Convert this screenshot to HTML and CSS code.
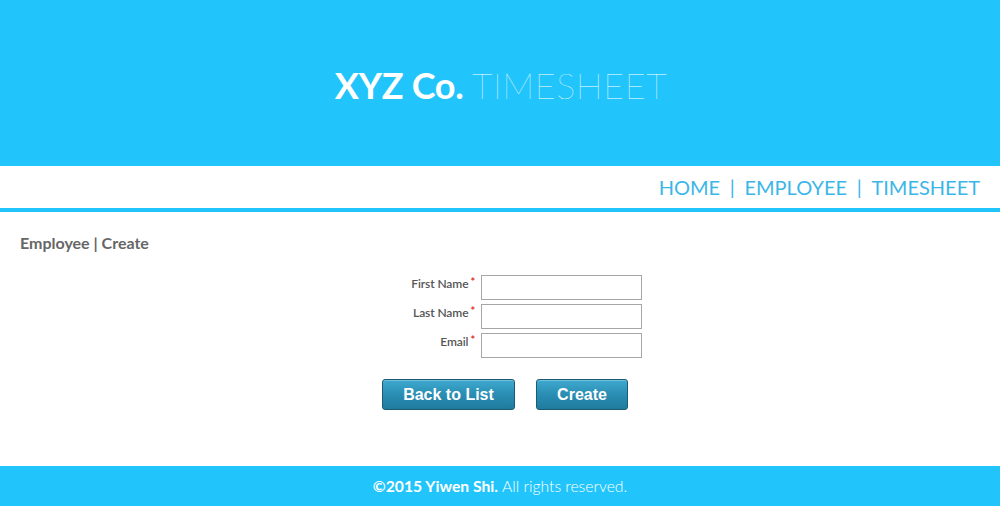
FILE: index.html
```html
<!DOCTYPE html>
<html>
<head>
<meta charset="utf-8">
<link rel="stylesheet" href="styles.css">
</head>
<body>
<header class="banner">
  <h1 class="title"><span class="brand">XYZ Co.</span> <span class="product">TIMESHEET</span></h1>
</header>
<nav class="nav">
  <a href="#">HOME</a><span class="sep">|</span><a href="#">EMPLOYEE</a><span class="sep">|</span><a href="#">TIMESHEET</a>
</nav>
<main class="content">
  <h2 class="crumb">Employee | Create</h2>
  <form class="form">
    <div class="row"><label>First Name<span class="req">*</span></label><input type="text"></div>
    <div class="row"><label>Last Name<span class="req">*</span></label><input type="text"></div>
    <div class="row"><label>Email<span class="req">*</span></label><input type="text"></div>
    <div class="actions">
      <button type="button" class="btn back">Back to List</button>
      <button type="button" class="btn create">Create</button>
    </div>
  </form>
</main>
<footer class="footer">
  <span class="copy">©2015 Yiwen Shi.</span> <span class="rights">All rights reserved.</span>
</footer>
</body>
</html>
```
FILE: styles.css
```css
html, body { margin: 0; padding: 0; }
body {
  font-family: Lato, "Open Sans", sans-serif;
  background: #fff;
  width: 1000px;
  height: 506px;
  overflow: hidden;
  display: flex;
  flex-direction: column;
}
.banner {
  background: #22c5fb;
  height: 166px;
  display: flex;
  align-items: center;
  justify-content: center;
}
.title {
  margin: 0;
  font-size: 36px;
  line-height: 1;
  color: #fff;
  position: relative;
  top: 2px;
  left: 1px;
  letter-spacing: -0.3px;
}
.brand { font-weight: 700; }
.product { font-weight: 100; letter-spacing: 0.5px; }
.nav {
  height: 42px;
  border-bottom: 4px solid #22c5fb;
  display: flex;
  align-items: center;
  justify-content: flex-end;
  padding-right: 20px;
  font-size: 20px;
  color: #3bb6e8;
}
.nav a { color: #3bb6e8; text-decoration: none; }
.nav .sep { margin: 0 9.7px; }
.content { flex: 1; padding: 0 20px; }
.crumb {
  margin: 22px 0 0 0;
  font-size: 16px;
  font-weight: 700;
  color: #666;
  line-height: 18px;
}
.form {
  display: flex;
  flex-direction: column;
  align-items: flex-start;
  margin-top: 23px;
  padding-left: 307px;
  gap: 4px;
}
.row {
  display: flex;
  align-items: flex-start;
}
.row label {
  width: 154px;
  text-align: right;
  font-size: 12px;
  font-weight: 600;
  color: #555;
  padding-right: 6px;
  padding-top: 1px;
  box-sizing: border-box;
  letter-spacing: -0.1px;
}
.req { color: #e03030; font-size: 11px; font-weight: 700; vertical-align: top; margin-left: 2px; position: relative; top: -1px; }
.row input {
  width: 161px;
  height: 25px;
  box-sizing: border-box;
  border: 1px solid #a6a6a6;
  margin: 0;
  padding: 2px 4px;
}
.actions {
  display: flex;
  gap: 21px;
  margin-top: 17px;
  margin-left: 55px;
}
.btn {
  font-family: "Liberation Sans", Arial, sans-serif;
  font-weight: 700;
  font-size: 16px;
  color: #fff;
  height: 31px;
  border: 1px solid #1a5a72;
  border-radius: 3px;
  background: linear-gradient(#3fa9cf, #2a8db3 50%, #1f7b9e);
  box-shadow: inset 0 1px 0 rgba(255,255,255,0.25);
  padding: 0;
  cursor: pointer;
}
.btn.back { width: 133px; }
.btn.create { width: 92px; }
.footer {
  background: #22c5fb;
  height: 40px;
  display: flex;
  align-items: center;
  justify-content: center;
  color: #fff;
  font-size: 15.7px;
}
.copy { font-weight: 700; margin-right: 4px; }
.rights { font-weight: 300; }
```
